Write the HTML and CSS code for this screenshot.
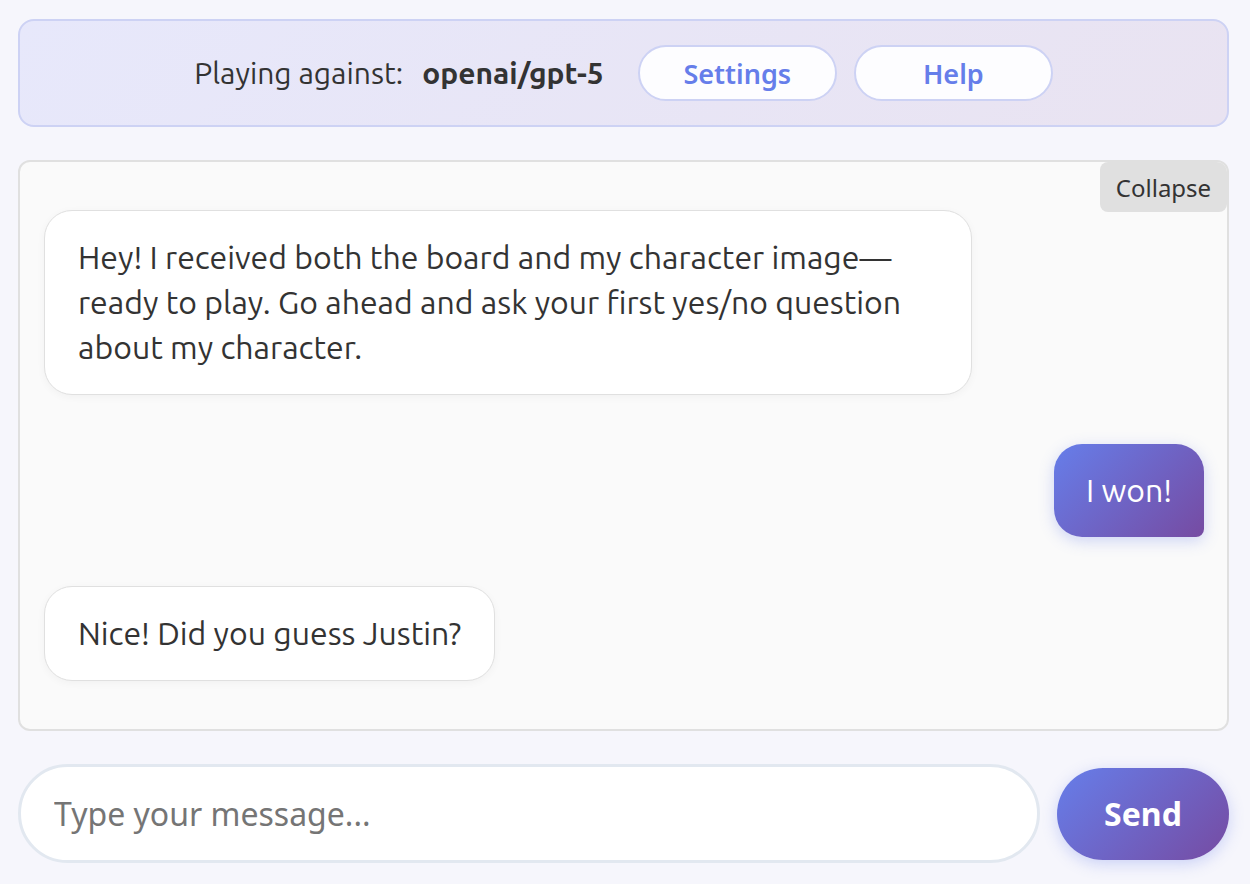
FILE: index.html
```html
<!DOCTYPE html>
<html lang="en">
<head>
<meta charset="utf-8">
<title>Guess Who</title>
<link rel="stylesheet" href="styles.css">
</head>
<body>
<div class="app">
  <header class="topbar">
    <span class="label">Playing against:</span>
    <strong class="model">openai/gpt-5</strong>
    <button class="pill-btn">Settings</button>
    <button class="pill-btn">Help</button>
  </header>

  <section class="chat">
    <button class="collapse">Collapse</button>
    <div class="msg bot">Hey! I received both the board and my character image—ready to play. Go ahead and ask your first yes/no question about my character.</div>
    <div class="msg user">I won!</div>
    <div class="msg bot">Nice! Did you guess Justin?</div>
  </section>

  <form class="composer">
    <input class="input" type="text" placeholder="Type your message...">
    <button class="send" type="button">Send</button>
  </form>
</div>
</body>
</html>
```

FILE: styles.css
```css
* { box-sizing: border-box; }

html, body {
  margin: 0;
  padding: 0;
}

body {
  background: #f6f6fc;
  font-family: "Ubuntu", "Noto Sans", sans-serif;
  color: #333;
}

.app {
  padding: 19px 21px 21px 18px;
  display: flex;
  flex-direction: column;
  gap: 33px;
}

.topbar {
  height: 108px;
  display: flex;
  align-items: center;
  justify-content: center;
  border: 2px solid #cdd2f4;
  border-radius: 16px;
  background: linear-gradient(135deg, #e7e8fb 0%, #e9e3f1 100%);
  font-size: 30px;
  color: #333;
}

.label {
  margin-right: 19px;
}

.model {
  font-weight: 700;
  margin-right: 34px;
}

.pill-btn {
  width: 199px;
  height: 56px;
  border: 2px solid #cdd2f4;
  border-radius: 28px;
  background: #fdfdff;
  color: #667eea;
  font-family: "Noto Sans", sans-serif;
  font-size: 27px;
  font-weight: 600;
  margin-right: 17px;
  padding: 0;
}

.pill-btn:last-child { margin-right: 0; }

.chat {
  position: relative;
  height: 571px;
  border: 2px solid #e0e0e0;
  border-radius: 12px;
  background: #fafafa;
  padding: 48px 23px 48px 24px;
  display: flex;
  flex-direction: column;
  gap: 49px;
}

.collapse {
  position: absolute;
  top: 0;
  right: 0;
  width: 127px;
  height: 50px;
  border: none;
  border-radius: 8px 10px 8px 8px;
  background: #e0e0e0;
  color: #333;
  font-family: "Noto Sans", sans-serif;
  font-size: 24px;
  padding: 0;
}

.msg {
  max-width: 80%;
  font-size: 32px;
  line-height: 45px;
  padding: 24px 33px;
  border-radius: 28px;
}

.msg.bot {
  align-self: flex-start;
  background: #fff;
  border: 1px solid #e0e0e0;
  color: #333;
  box-shadow: 0 2px 8px rgba(0, 0, 0, 0.04);
}

.msg.user {
  align-self: flex-end;
  background: linear-gradient(135deg, #667eea 0%, #764ba2 100%);
  color: #fff;
  padding: 24px 32px;
  border-radius: 28px 28px 8px 28px;
  box-shadow: 0 4px 15px rgba(102, 126, 234, 0.3);
}

.composer {
  display: flex;
  align-items: center;
  gap: 17px;
  margin: 0;
}

.input {
  flex: 1;
  height: 99px;
  border: 3px solid #e2e8f0;
  border-radius: 50px;
  background: #fff;
  padding: 0 33px;
  font-family: "Noto Sans", sans-serif;
  font-size: 32px;
  color: #333;
  outline: none;
}

.input::placeholder {
  color: #757575;
}

.send {
  width: 172px;
  height: 92px;
  border: none;
  border-radius: 46px;
  background: linear-gradient(135deg, #667eea 0%, #764ba2 100%);
  color: #fff;
  font-family: "Noto Sans", sans-serif;
  font-size: 32px;
  font-weight: 700;
  box-shadow: 0 4px 15px rgba(102, 126, 234, 0.3);
  padding: 0;
}
```
